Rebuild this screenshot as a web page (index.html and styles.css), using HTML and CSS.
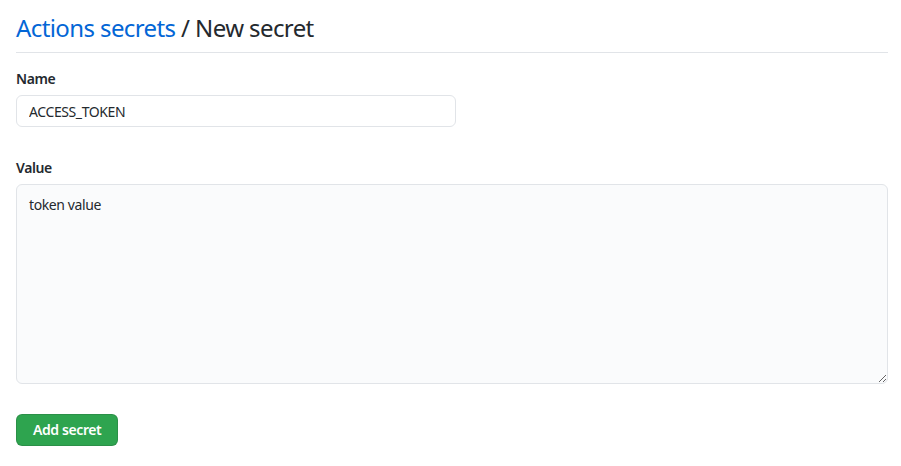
FILE: index.html
```html
<!DOCTYPE html>
<html>
<head>
<meta charset="utf-8">
<link rel="stylesheet" href="styles.css">
</head>
<body>
<div class="page">
  <div class="subhead">
    <h2 class="subhead-heading"><a class="crumb" href="#">Actions secrets</a> / New secret</h2>
  </div>
  <form class="form">
    <div class="field">
      <label class="label">Name</label>
      <input class="input name-input" type="text" value="ACCESS_TOKEN">
    </div>
    <div class="field">
      <label class="label">Value</label>
      <textarea class="input textarea">token value</textarea>
    </div>
    <button class="btn-primary" type="button">Add secret</button>
  </form>
</div>
</body>
</html>
```
FILE: styles.css
```css
html, body {
  margin: 0;
  padding: 0;
  background: #ffffff;
}
body {
  font-family: "Noto Sans", "Open Sans", sans-serif;
  color: #24292e;
  font-size: 14px;
  letter-spacing: -0.4px;
}
.page {
  padding: 0 13px 0 16px;
}
.subhead {
  border-bottom: 1px solid #e1e4e8;
  padding-top: 11px;
  padding-bottom: 8px;
  margin-bottom: 16px;
}
.subhead-heading {
  margin: 0;
  font-size: 24px;
  font-weight: 400;
  line-height: 33px;
  letter-spacing: -0.6px;
}
.crumb {
  color: #0366d6;
  text-decoration: none;
}
.form {
  display: flex;
  flex-direction: column;
  align-items: flex-start;
}
.field {
  display: flex;
  flex-direction: column;
  align-items: stretch;
  margin-bottom: 31px;
  align-self: stretch;
}
.label {
  font-weight: 600;
  font-size: 14px;
  line-height: 20px;
  margin-bottom: 6px;
}
.input {
  box-sizing: border-box;
  font-family: inherit;
  font-size: 14px;
  letter-spacing: -0.4px;
  color: #24292e;
  border: 1px solid #e1e4e8;
  border-radius: 6px;
  padding: 5px 12px;
  line-height: 20px;
  outline: none;
  background: #ffffff;
}
.name-input {
  width: 440px;
  height: 32px;
}
.textarea {
  width: 100%;
  height: 200px;
  resize: vertical;
  background: #fafbfc;
  padding: 10px 12px 8px;
}
.btn-primary {
  box-sizing: border-box;
  margin-top: -1px;
  height: 32px;
  padding: 5px 16px;
  font-family: inherit;
  font-size: 14px;
  font-weight: 600;
  letter-spacing: -0.4px;
  color: #ffffff;
  background: #2ea44f;
  border: 1px solid rgba(27, 31, 35, 0.15);
  border-radius: 6px;
  line-height: 20px;
}
```
